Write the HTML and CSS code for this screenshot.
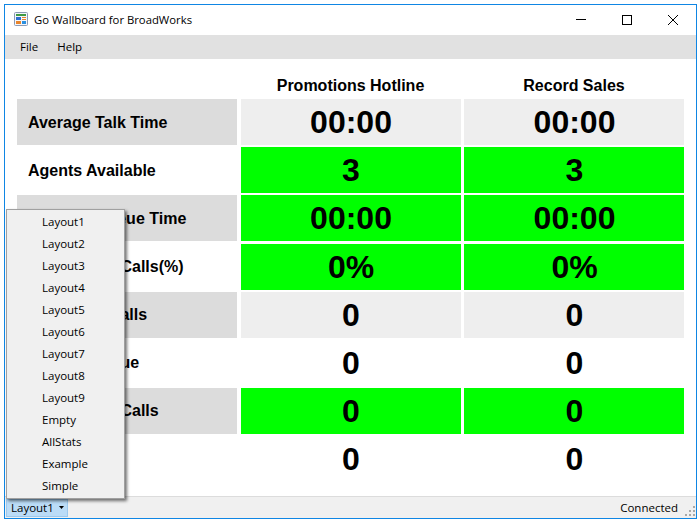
FILE: index.html
```html
<!DOCTYPE html>
<html lang="en">
<head>
<meta charset="utf-8">
<title>Go Wallboard for BroadWorks</title>
<link rel="stylesheet" href="styles.css">
</head>
<body>
<div class="window">
  <header class="titlebar">
    <svg class="app-icon" width="16" height="16" viewBox="0 0 16 16">
      <rect x="0.5" y="0.5" width="13" height="13" rx="1" fill="#f4f6fa" stroke="#8b9ab5"/>
      <rect x="2" y="2" width="10" height="2" fill="#3f9a45"/>
      <rect x="2" y="5" width="5" height="3" fill="#2f6fd0"/>
      <rect x="8" y="5" width="4" height="1" fill="#e8842c"/>
      <rect x="8" y="7" width="4" height="1" fill="#e8842c"/>
      <rect x="2" y="9" width="5" height="3" fill="#e8842c"/>
      <rect x="8" y="9" width="4" height="3" fill="#2a8fe0"/>
    </svg>
    <span class="title">Go Wallboard for BroadWorks</span>
    <div class="controls">
      <button class="ctl"><svg width="10" height="10" viewBox="0 0 10 10"><path d="M0 4.5H10" stroke="#000" fill="none"/></svg></button>
      <button class="ctl"><svg width="10" height="10" viewBox="0 0 10 10"><rect x="0.5" y="0.5" width="9" height="9" stroke="#000" fill="none"/></svg></button>
      <button class="ctl"><svg width="10" height="10" viewBox="0 0 10 10"><path d="M0 0L10 10M10 0L0 10" stroke="#000" stroke-width="1" fill="none"/></svg></button>
    </div>
  </header>
  <nav class="menubar"><span class="menu-item">File</span><span class="menu-item">Help</span></nav>
  <main class="board">
    <div class="grid">
      <div class="head"></div><div class="head">Promotions Hotline</div><div class="head">Record Sales</div>

      <div class="label shade">Average Talk Time</div><div class="val grey">00:00</div><div class="val grey">00:00</div>
      <div class="label">Agents Available</div><div class="val green">3</div><div class="val green">3</div>
      <div class="label shade">Average Queue Time</div><div class="val green">00:00</div><div class="val green">00:00</div>
      <div class="label">Abandoned Calls(%)</div><div class="val green">0%</div><div class="val green">0%</div>
      <div class="label shade">Answered Calls</div><div class="val grey">0</div><div class="val grey">0</div>
      <div class="label">Calls in Queue</div><div class="val">0</div><div class="val">0</div>
      <div class="label shade">Abandoned Calls</div><div class="val green">0</div><div class="val green">0</div>
      <div class="label">Total Calls</div><div class="val">0</div><div class="val">0</div>
    </div>
  </main>
  <footer class="statusbar">
    <span class="layout-btn">Layout1<svg class="caret" width="5" height="3" viewBox="0 0 5 3"><path d="M0 0H5L2.5 3Z" fill="#000"/></svg></span>
    <span class="status">Connected</span>
    <svg class="grip" width="11" height="11" viewBox="0 0 11 11" fill="#a8a8a8">
      <rect x="8" y="0" width="2" height="2"/><rect x="4" y="4" width="2" height="2"/><rect x="8" y="4" width="2" height="2"/>
      <rect x="0" y="8" width="2" height="2"/><rect x="4" y="8" width="2" height="2"/><rect x="8" y="8" width="2" height="2"/>
    </svg>
  </footer>
  <ul class="popup">
    <li>Layout1</li><li>Layout2</li><li>Layout3</li><li>Layout4</li><li>Layout5</li><li>Layout6</li><li>Layout7</li><li>Layout8</li><li>Layout9</li><li>Empty</li><li>AllStats</li><li>Example</li><li>Simple</li>
  </ul>
</div>
</body>
</html>
```

FILE: styles.css
```css
* { box-sizing: border-box; }
html, body { margin: 0; height: 100%; background: #fff; }
body { padding: 4px 3px 5px 4px; overflow: hidden; }
.window {
  position: relative;
  height: 515px;
  border: 1px solid #0f86e4;
  background: #fff;
  display: flex;
  flex-direction: column;
  font-family: "Open Sans", "Noto Sans", sans-serif;
  font-size: 11.5px;
  color: #000;
}
.titlebar { height: 30px; display: flex; align-items: center; padding-left: 9px; flex: none; }
.app-icon { flex: none; }
.title { margin-left: 4px; font-size: 11.3px; padding-bottom: 2px; }
.controls { margin-left: auto; display: flex; }
.ctl { width: 46px; height: 30px; border: 0; padding: 0; background: none; display: flex; align-items: center; justify-content: center; }
.menubar { height: 24px; background: #e1e1e1; display: flex; align-items: center; padding-left: 6px; padding-bottom: 1px; flex: none; }
.menu-item { padding: 0 9px; }
.menu-item + .menu-item { margin-left: 1px; }
.board { flex: 1; min-height: 0; padding: 15px 12px 0 12px; }
.grid {
  display: grid;
  grid-template-columns: 220px 220px 220px;
  grid-template-rows: 23px repeat(8, 46px);
  column-gap: 3.5px;
  row-gap: 2.15px;
}
.head { font: bold 16px "Liberation Sans", Arial, sans-serif; display: flex; align-items: center; justify-content: center; }
.label { font: bold 16px "Liberation Sans", Arial, sans-serif; display: flex; align-items: center; padding: 1px 0 0 11px; }
.shade { background: #dcdcdc; }
.val { font: bold 32px "Liberation Sans", Arial, sans-serif; display: flex; align-items: center; justify-content: center; padding: 1px 0 0 1px; }
.grey { background: #eee; }
.green { background: #00ff00; }
.statusbar {
  height: 22px; flex: none; background: #f0f0f0; border-top: 1px solid #dcdcdc;
  display: flex; align-items: center; padding-left: 1px; position: relative;
}
.layout-btn {
  height: 18px; background: #bbdcf7; border: 1px solid #9cc9ee;
  display: flex; align-items: center; padding: 0 3px 1px 4px; gap: 5px;
}
.status { margin-left: auto; margin-right: 18px; }
.grip { position: absolute; right: 0; bottom: 1px; }
.popup {
  position: absolute; left: 1px; top: 204px; width: 119px; height: 290px;
  margin: 0; padding: 1px 0 0; list-style: none;
  background: #f0f0f0; border: 1px solid #a0a0a0;
  box-shadow: 2px 2px 3px rgba(0,0,0,.55);
}
.popup li { height: 22px; line-height: 22px; padding-left: 35px; }
```
